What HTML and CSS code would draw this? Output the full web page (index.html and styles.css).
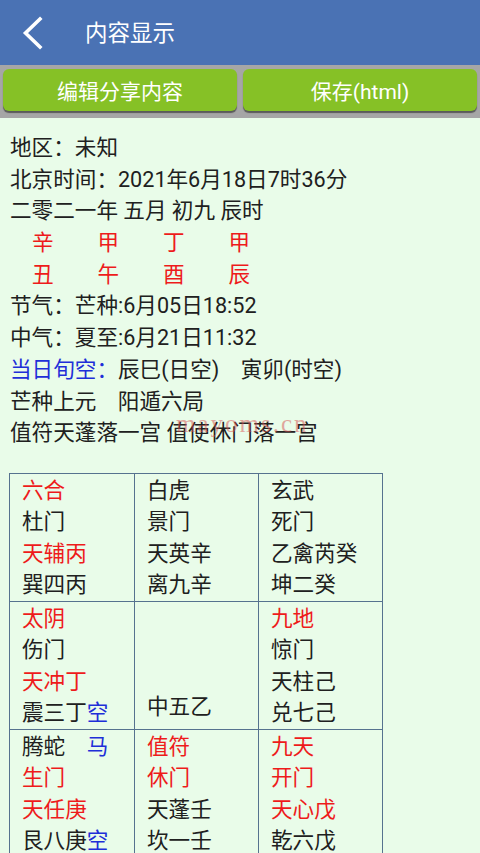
FILE: index.html
```html
<!DOCTYPE html>
<html lang="zh">
<head>
<meta charset="utf-8">
<title>内容显示</title>
<link rel="stylesheet" href="styles.css">
</head>
<body>
<div class="header">
  <svg class="back" width="24" height="34" viewBox="0 0 24 34"><path d="M20 3 L5.5 17 L20 31" fill="none" stroke="#ffffff" stroke-width="3.6" stroke-linecap="square"/></svg>
  <span class="title">内容显示</span>
</div>
<div class="toolbar">
  <div class="btn">编辑分享内容</div>
  <div class="btn">保存(html)</div>
</div>
<div class="content">
  <div class="ln">地区：未知</div>
  <div class="ln">北京时间：2021年6月18日7时36分</div>
  <div class="ln">二零二一年 五月 初九 辰时</div>
  <div class="ln gz"><span>辛</span><span>甲</span><span>丁</span><span>甲</span></div>
  <div class="ln gz"><span>丑</span><span>午</span><span>酉</span><span>辰</span></div>
  <div class="ln">节气：芒种:6月05日18:52</div>
  <div class="ln">中气：夏至:6月21日11:32</div>
  <div class="ln pre"><span class="b">当日旬空：</span>辰巳(日空)    寅卯(时空)</div>
  <div class="ln pre">芒种上元    阳遁六局</div>
  <div class="ln mark-wrap">值符天蓬落一宫 值使休门落一宫<span class="mark">mayoms.cn</span></div>

  <table class="pan">
    <tr>
      <td><div class="r">六合</div><div>杜门</div><div class="r">天辅丙</div><div>巽四丙</div></td>
      <td><div>白虎</div><div>景门</div><div>天英辛</div><div>离九辛</div></td>
      <td><div>玄武</div><div>死门</div><div>乙禽芮癸</div><div>坤二癸</div></td>
    </tr>
    <tr>
      <td><div class="r">太阴</div><div>伤门</div><div class="r">天冲丁</div><div>震三丁<span class="b">空</span></div></td>
      <td class="mid"><div>中五乙</div></td>
      <td><div class="r">九地</div><div>惊门</div><div>天柱己</div><div>兑七己</div></td>
    </tr>
    <tr>
      <td><div class="pre">腾蛇    <span class="b">马</span></div><div class="r">生门</div><div class="r">天任庚</div><div>艮八庚<span class="b">空</span></div></td>
      <td><div class="r">值符</div><div class="r">休门</div><div>天蓬壬</div><div>坎一壬</div></td>
      <td><div class="r">九天</div><div class="r">开门</div><div class="r">天心戊</div><div>乾六戊</div></td>
    </tr>
  </table>
</div>
</body>
</html>
```

FILE: styles.css
```css
html, body {
  margin: 0;
  padding: 0;
}
body {
  background: #e9fce9;
  font-family: Roboto, "Noto Sans CJK SC", sans-serif;
  color: #202020;
  min-height: 853px;
}
.header {
  height: 65px;
  background: #4a72b4;
  display: flex;
  align-items: center;
  padding-left: 20px;
}
.back {
  display: block;
}
.title {
  margin-left: 41px;
  color: #ffffff;
  font-size: 22.5px;
  line-height: 30px;
}
.toolbar {
  background: #a6a6a6;
  display: flex;
  gap: 6px;
  padding: 4px 3px 7px 3px;
}
.btn {
  flex: 1;
  height: 42px;
  background: #86c126;
  border-radius: 6px;
  box-shadow: 0 2px 1px #5a5a5a;
  color: #ffffff;
  font-size: 21px;
  display: flex;
  align-items: center;
  justify-content: center;
}
.content {
  padding: 14px 10px 0 10px;
  font-size: 21.6px;
  line-height: 31.7px;
}
.ln {
  height: 31.7px;
  white-space: nowrap;
}
.pre {
  white-space: pre;
}
.b {
  color: #1e2fd8;
}
.r {
  color: #ee1b1b;
}
.gz {
  padding-left: 22px;
  color: #ee1b1b;
}
.gz span {
  display: inline-block;
  width: 65.5px;
}
.mark-wrap {
  position: relative;
}
.mark {
  position: absolute;
  left: 166px;
  top: -9px;
  font-family: "Liberation Serif", serif;
  font-size: 25px;
  letter-spacing: 2px;
  color: rgba(215, 80, 80, 0.5);
}
.pan {
  margin-top: 24px;
  margin-left: -1px;
  border-collapse: collapse;
  width: 373px;
  table-layout: fixed;
}
.pan td {
  box-sizing: border-box;
  border: 1.5px solid #56728f;
  vertical-align: top;
  padding: 1px 0 0 12px;
  line-height: 31.5px;
  width: 124px;
}
.pan td:first-child {
  width: 125px;
}
.pan td.mid {
  vertical-align: bottom;
  padding-bottom: 6px;
}
.pan td div {
  white-space: pre;
}
```
